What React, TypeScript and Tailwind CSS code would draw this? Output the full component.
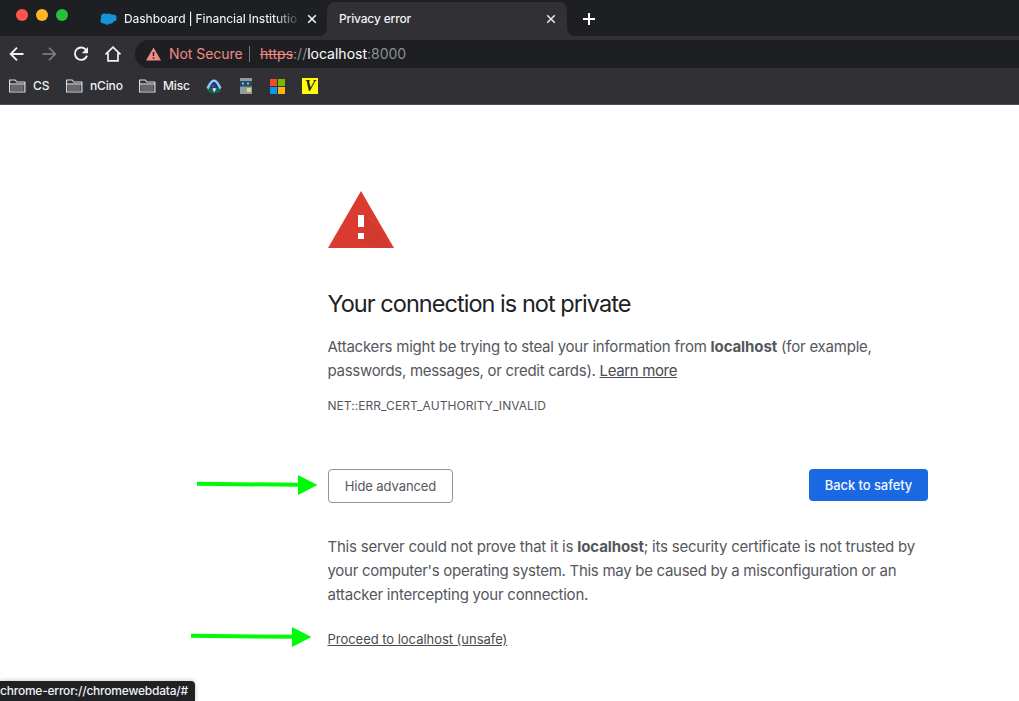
import type { ReactNode } from "react";

function CloseIcon({ color }: { color: string }) {
  return (
    <svg width="10" height="10" viewBox="0 0 10 10" stroke={color} strokeWidth="1.6" className="shrink-0">
      <path d="M1.2 1.2 8.8 8.8M8.8 1.2 1.2 8.8" />
    </svg>
  );
}

function FolderIcon() {
  return (
    <svg width="17" height="14" viewBox="0 0 17 14" className="shrink-0">
      <path d="M.6 13V1h5.6l1.6 2H15.9v10z" fill="#303035" stroke="#dcdde0" strokeWidth="1.2" strokeLinejoin="round" />
      <path d="M2 6h12.5v6H2z" fill="#67686c" />
      <path d="M.6 5h15.3" stroke="#dcdde0" strokeWidth="1.2" />
    </svg>
  );
}

function Folder({ children, className }: { children: ReactNode; className: string }) {
  return (
    <div className={"flex shrink-0 items-center text-[12px] leading-4 font-medium text-[#f1f2f4] " + className}>
      <FolderIcon />
      <span className="ml-[7px] tracking-[-0.15px] whitespace-nowrap">{children}</span>
    </div>
  );
}

function TabStrip() {
  return (
    <div className="flex h-9 bg-[#1e1f22]">
      <div className="flex w-[100px] shrink-0 gap-2 pt-[9px] pl-4">
        <span className="size-3 rounded-full bg-[#ff544d]" />
        <span className="size-3 rounded-full bg-[#feb429]" />
        <span className="size-3 rounded-full bg-[#25c138]" />
      </div>
      <div className="flex w-[217px] shrink-0 items-center pt-[2px]">
        <svg width="17" height="12" viewBox="0 0 17 12" fill="#1695d7" className="shrink-0">
          <circle cx="4.5" cy="4.2" r="3.6" />
          <circle cx="8.8" cy="3.7" r="3.2" />
          <circle cx="13" cy="5" r="3.6" />
          <circle cx="3.5" cy="7.5" r="3" />
          <circle cx="7" cy="8.6" r="3.1" />
          <circle cx="10.5" cy="7.8" r="2.9" />
        </svg>
        <div className="ml-[7px] w-[175px] shrink-0 bg-linear-to-r from-[#f1f2f4] from-[86%] to-[#3a3b3e] bg-clip-text text-[12px] leading-4 font-medium tracking-[-0.13px] whitespace-nowrap text-transparent">
          Dashboard | Financial Institutio
        </div>
        <div className="ml-2">
          <CloseIcon color="#f1f2f4" />
        </div>
      </div>
      <div className="flex w-[10px] shrink-0 items-end bg-[#303035]">
        <div className="h-9 w-[10px] rounded-br-[8px] bg-[#1e1f22]" />
      </div>
      <div className="flex h-9 w-[240px] shrink-0 bg-[#1e1f22] pt-[2px]">
        <div className="flex flex-1 items-center justify-between rounded-t-[8px] bg-[#303035] pr-[11px] pl-3">
          <span className="text-[12px] leading-4 font-medium tracking-[-0.16px] text-[#f1f2f4]">Privacy error</span>
          <CloseIcon color="#e2e3e6" />
        </div>
      </div>
      <div className="flex w-[10px] shrink-0 bg-[#303035]">
        <div className="h-9 w-[10px] rounded-bl-[8px] bg-[#1e1f22]" />
      </div>
      <svg width="14" height="14" viewBox="0 0 14 14" className="mt-3 ml-[5px]">
        <path d="M7 1v12M1 7h12" stroke="#fff" strokeWidth="2" />
      </svg>
    </div>
  );
}

function Toolbar() {
  return (
    <div className="flex h-8 items-center bg-[#303035] pt-1">
      <svg width="135" height="28" viewBox="0 0 135 28" fill="none" strokeWidth="1.9" className="shrink-0">
        <path d="M23.5 14H11M17 7.7 10.7 14l6.3 6.3" stroke="#f1f2f4" />
        <path d="M42.5 14H55M49 7.7 55.3 14 49 20.3" stroke="#85868a" strokeWidth="1.5" />
        <path d="M86.3 10.3A6.2 6.2 0 1 0 87 15.6" stroke="#f1f2f4" />
        <path d="M88 7v6.2h-6.2z" fill="#f1f2f4" />
        <path d="M105.5 14.3 113 7.1l7.5 7.2M108 13v7.900h10V13" stroke="#f1f2f4" strokeWidth="1.7" />
      </svg>
      <div className="flex h-7 flex-1 items-center rounded-l-full bg-[#1e1f22] pl-[11px] text-[14px] leading-5 whitespace-nowrap">
        <svg width="15" height="14" viewBox="0 0 15 14" className="shrink-0">
          <path d="M7.5.5 15 13.5H0z" fill="#f08c84" />
          <path d="M7.5 5v4M7.5 10.2v1.5" stroke="#1e1f22" strokeWidth="1.5" />
        </svg>
        <span className="ml-2 w-[74px] tracking-[-0.05px] text-[#f08c84]">Not Secure</span>
        <span className="ml-[6px] h-4 w-px bg-[#77787c]" />
        <span className="ml-[10px]">
          <span className="text-[#f08c84] line-through">https</span>
          <span className="text-[#8d8e92]">://</span>
          <span className="text-white">localhost</span>
          <span className="text-[#8d8e92]">:8000</span>
        </span>
      </div>
    </div>
  );
}

function Bookmarks() {
  return (
    <div className="flex h-[37px] items-center border-b border-[#505054] bg-[#303035] pl-[9px]">
      <Folder className="w-[57px]">CS</Folder>
      <Folder className="w-[73px]">nCino</Folder>
      <Folder className="w-[67px]">Misc</Folder>
      <svg width="16" height="16" viewBox="0 0 16 16" className="shrink-0">
        <path d="M.5 10h15L14 14l-6 1.5L2 14z" fill="#12654f" />
        <path d="M1.5 10.5C3.5 7.5 4.5 2.8 8 2.8s4.5 4.7 6.5 7.7" fill="none" stroke="#8fc8fa" strokeWidth="2.6" />
        <path d="M3.8 10.5C5 7 6 4.3 8 4.3s3 2.7 4.2 6.2z" fill="#243a82" />
        <path d="m6.500 10 4 .5-2.500 4z" fill="#d5f4ec" />
        <path d="M6 7.500h1.500V9H6z" fill="#b0478b" />
      </svg>
      <svg width="12" height="16" viewBox="0 0 12 16" className="ml-[18px] shrink-0">
        <path d="M0 0h12v3H0z" fill="#92999f" />
        <path d="M0 3h12v5H0z" fill="#244b63" />
        <path d="M2 4.5h2v2H2zM7 4.5h2v2H7z" fill="#7bc5f1" />
        <path d="M0 8.5h12V16H0z" fill="#8f9da5" />
        <path d="M7 10h4v4H7z" fill="#e1d66e" />
      </svg>
      <svg width="15" height="15" viewBox="0 0 15 15" className="ml-[18px] shrink-0">
        <path d="M0 0h7v7H0z" fill="#f34b1c" />
        <path d="M8 0h7v7H8z" fill="#75b900" />
        <path d="M0 8h7v7H0z" fill="#0799ee" />
        <path d="M8 8h7v7H8z" fill="#ffb50b" />
      </svg>
      <span className="ml-[17px] flex size-4 items-center justify-center bg-[#ffff08] font-['Liberation_Serif',serif] text-[16px] leading-4 font-bold text-[#26260d] italic">
        V
      </span>
    </div>
  );
}

function Arrow({ className }: { className: string }) {
  return (
    <svg width="122" height="22" viewBox="0 0 122 22" className={"absolute " + className}>
      <path d="M1 9.8 103 10.8" stroke="#00fb09" strokeWidth="4" />
      <path d="M102 1v20l19.5-10z" fill="#00fb09" />
    </svg>
  );
}

export default function App() {
  return (
    <div className="relative flex h-[701px] w-[1019px] flex-col overflow-hidden bg-white font-['Inter',sans-serif]">
      <TabStrip />
      <Toolbar />
      <Bookmarks />
      <main className="ml-[328px] w-[600px] pt-[86px] text-[15px] leading-6 text-[#54575c]">
        <svg width="66" height="57" viewBox="0 0 66 57">
          <path d="M33 0 66 57H0z" fill="#d93b30" />
          <path d="m36 24 14 13 11.5 20H47L30 48l6-6z" fill="#d1392e" />
          <path d="M30 24h6v12h-6zM30 42h6v6h-6z" fill="#fff" />
        </svg>
        <h1 className="-ml-[0.5px] mt-[41px] text-[23.5px] leading-[30px] tracking-[-0.96px] whitespace-nowrap text-[#202124]">
          Your connection is not private
        </h1>
        <p className="-ml-[0.5px] mt-4 tracking-[-0.225px] whitespace-nowrap">
          Attackers might be trying to steal your information from <b className="tracking-[-0.1px]">localhost</b> (for example,
          <br />
          <span className="tracking-[-0.29px]">passwords, messages, or credit cards). </span>
          <a className="tracking-[-0.35px] text-[#484b50] underline">Learn more</a>
        </p>
        <p className="-ml-[0.5px] mt-[14px] text-[12px] leading-[18px] tracking-[0.05px]">NET::ERR_CERT_AUTHORITY_INVALID</p>
        <div className="mt-[54px] flex items-start justify-between text-[13px] leading-4">
          <button className="h-[34px] w-[125px] rounded-[4px] border border-[#919499] tracking-[-0.08px]">Hide advanced</button>
          <button className="h-8 w-[119px] rounded-[4px] bg-[#1a69e3] font-medium tracking-[-0.08px] text-[#f2f7ff]">Back to safety</button>
        </div>
        <p className="-ml-[0.5px] mt-8 tracking-[-0.22px] whitespace-nowrap">
          This server could not prove that it is <b className="tracking-[-0.1px]">localhost</b>; its security certificate is not trusted by
          <br />
          <span className="tracking-[-0.285px]">your computer's operating system. This may be caused by a misconfiguration or an</span>
          <br />
          <span className="tracking-[-0.23px]">attacker intercepting your connection.</span>
        </p>
        <a className="-ml-[0.5px] mt-5 block text-[13px] tracking-[-0.03px] text-[#484b50] underline">Proceed to localhost (unsafe)</a>
      </main>
      <Arrow className="top-[474px] left-[196px]" />
      <Arrow className="top-[626px] left-[190px]" />
      <div className="absolute bottom-0 left-0 flex h-5 w-[195px] items-center rounded-tr-[4px] bg-[#202124] text-[12px] font-medium tracking-[-0.22px] whitespace-nowrap text-[#f1f2f4] shadow-[0_0_5px_rgba(0,0,0,0.25)]">
        chrome-error://chromewebdata/#
      </div>
    </div>
  );
}
